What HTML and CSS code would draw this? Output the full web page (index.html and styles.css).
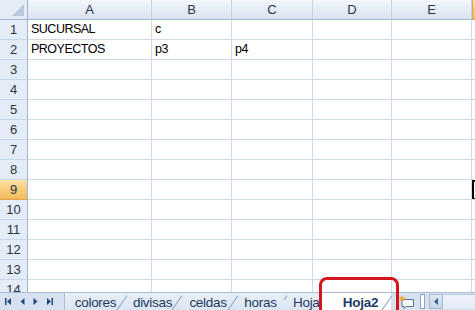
FILE: index.html
```html
<!DOCTYPE html>
<html lang="es">
<head>
    <meta charset="UTF-8">
    <title>Hoja2</title>
    <link rel="stylesheet" href="styles.css">
</head>
<body>
    <div class="sheet">
        <table class="grid">
            <colgroup>
                <col class="col-rowhead">
                <col class="col-a">
                <col class="col-b">
                <col class="col-c">
                <col class="col-d">
                <col class="col-e">
                <col class="col-f">
            </colgroup>
            <tr class="heads">
                <th class="corner"></th><th>A</th><th>B</th><th>C</th><th>D</th><th>E</th><th class="picked"></th>
            </tr>
            <tr><th>1</th><td>SUCURSAL</td><td>c</td><td></td><td></td><td></td><td></td></tr>
            <tr><th>2</th><td>PROYECTOS</td><td>p3</td><td>p4</td><td></td><td></td><td></td></tr>
            <tr><th>3</th><td></td><td></td><td></td><td></td><td></td><td></td></tr>
            <tr><th>4</th><td></td><td></td><td></td><td></td><td></td><td></td></tr>
            <tr><th>5</th><td></td><td></td><td></td><td></td><td></td><td></td></tr>
            <tr><th>6</th><td></td><td></td><td></td><td></td><td></td><td></td></tr>
            <tr><th>7</th><td></td><td></td><td></td><td></td><td></td><td></td></tr>
            <tr><th>8</th><td></td><td></td><td></td><td></td><td></td><td></td></tr>
            <tr><th class="picked">9</th><td></td><td></td><td></td><td></td><td></td><td class="active"></td></tr>
            <tr><th>10</th><td></td><td></td><td></td><td></td><td></td><td></td></tr>
            <tr><th>11</th><td></td><td></td><td></td><td></td><td></td><td></td></tr>
            <tr><th>12</th><td></td><td></td><td></td><td></td><td></td><td></td></tr>
            <tr><th>13</th><td></td><td></td><td></td><td></td><td></td><td></td></tr>
            <tr><th>14</th><td></td><td></td><td></td><td></td><td></td><td></td></tr>
        </table>
    </div>

    <div class="tabbar">
        <div class="nav">
            <svg width="7" height="7" viewBox="0 0 7 7"><rect x="0" y="0" width="1.5" height="7" fill="#23487d"/><path d="M6 0 L2 3.5 L6 7 Z" fill="#23487d"/></svg>
            <svg width="5" height="7" viewBox="0 0 5 7"><path d="M4.5 0 L0.5 3.5 L4.5 7 Z" fill="#23487d"/></svg>
            <svg width="5" height="7" viewBox="0 0 5 7"><path d="M0.5 0 L4.5 3.5 L0.5 7 Z" fill="#23487d"/></svg>
            <svg width="7" height="7" viewBox="0 0 7 7"><path d="M1 0 L5 3.5 L1 7 Z" fill="#23487d"/><rect x="5.5" y="0" width="1.5" height="7" fill="#23487d"/></svg>
        </div>
        <div class="tabs">
            <span class="tab first">colores</span>
            <span class="tab">divisas</span>
            <span class="tab">celdas</span>
            <span class="tab">horas</span>
            <span class="tab cut">Hoja</span>
            <span class="tab current">Hoja2</span>
            <span class="new-sheet">
                <svg width="17" height="14" viewBox="0 0 17 14">
                    <path d="M4 4.5 H15.5 V11.5 H8 L6 13.5 V11.5 H4 Z" fill="#f4f7fb" stroke="#5f7089" stroke-width="1"/>
                    <path d="M4 0 L5 2.2 L7.4 2.3 L5.6 3.8 L6.2 6.2 L4 4.9 L1.8 6.2 L2.4 3.8 L0.6 2.3 L3 2.2 Z" fill="#f3a92a"/>
                </svg>
            </span>
        </div>
        <div class="hscroll">
            <span class="split"></span>
            <span class="arrow">
                <svg width="4" height="7" viewBox="0 0 4 7"><path d="M4 0 L0 3.5 L4 7 Z" fill="#3b5c8c"/></svg>
            </span>
            <span class="track"></span>
        </div>
    </div>

    <div class="mark"></div>
</body>
</html>
```

FILE: styles.css
```css
body {
    margin: 0;
    width: 475px;
    height: 310px;
    overflow: hidden;
    font-family: "Liberation Sans", Arial, sans-serif;
    background: #fff;
}
.sheet {
    height: 292px;
    overflow: hidden;
}
.grid {
    table-layout: fixed;
    width: 552px;
    border-collapse: separate;
    border-spacing: 0;
    font-size: 12.5px;
    color: #000;
}
.col-rowhead { width: 28px; }
.col-a { width: 124px; }
.col-b { width: 80px; }
.col-c { width: 81px; }
.col-d { width: 79px; }
.col-e { width: 80px; }
.col-f { width: 80px; }

.grid tr {
    height: 20px;
}
.grid td {
    box-sizing: border-box;
    height: 20px;
    padding: 0 0 2px 3px;
    vertical-align: bottom;
    line-height: 15px;
    letter-spacing: -0.5px;
    border-right: 1px solid #d0d7e5;
    border-bottom: 1px solid #d0d7e5;
    white-space: nowrap;
    overflow: hidden;
}
.grid th {
    box-sizing: border-box;
    height: 20px;
    padding: 0;
    font-weight: normal;
    font-size: 13px;
    color: #2b3441;
    background: #e4ecf7;
    border-right: 1px solid #9eb6ce;
    border-bottom: 1px solid #c5d5ea;
    text-align: center;
}
.heads th {
    background: linear-gradient(#f5f8fc, #e6edf7 45%, #d9e3f1);
    border-right: 1px solid #c2d2e6;
    border-bottom: 1px solid #9eb6ce;
}
.heads th.corner {
    position: relative;
    background: #e4ecf7;
    border-right: 1px solid #9eb6ce;
}
.corner::after {
    content: "";
    position: absolute;
    right: 3px;
    bottom: 3px;
    border-style: solid;
    border-width: 0 0 12px 12px;
    border-color: transparent transparent #b9c8dc transparent;
}
.grid th.picked {
    background: linear-gradient(#fbe3a8, #f6cc7a 50%, #f1bd5b);
    border-bottom-color: #e4a549;
}
.heads th.picked {
    border-left: 1px solid #e3a64a;
}
.grid td.active {
    box-shadow: inset 2px 0 0 #000, inset 0 2px 0 #000, inset 0 -1px 0 #000;
}

.tabbar {
    display: flex;
    align-items: stretch;
    height: 18px;
    background: #d6e2f2;
    border-top: 1px solid #a9bdd6;
    box-sizing: border-box;
}
.nav {
    display: flex;
    align-items: center;
    gap: 8px;
    width: 58px;
    flex-shrink: 0;
    padding-left: 5px;
    box-sizing: border-box;
}
.tabs {
    display: flex;
    align-items: stretch;
    width: 362px;
    flex-shrink: 0;
    padding-left: 6px;
    box-sizing: border-box;
}
.tab {
    position: relative;
    display: flex;
    flex-shrink: 0;
    align-items: center;
    justify-content: center;
    font-size: 13.5px;
    letter-spacing: -0.3px;
    color: #213a60;
    background: linear-gradient(#e9eff8, #dbe5f2);
    padding: 1px 9px 0 11px;
    box-sizing: border-box;
}
.tab::before {
    content: "";
    position: absolute;
    left: -3px;
    top: 1px;
    height: 19px;
    width: 1px;
    background: #8ea2bf;
    transform: rotate(35deg);
}
.tab.first {
    width: 60px;
    border-left: 1px solid #a9bdd6;
}
.tab.first::before {
    display: none;
}
.tab:nth-child(2) { width: 55px; }
.tab:nth-child(3) { width: 56px; }
.tab:nth-child(4) { width: 49px; }
.tab.cut {
    width: 35px;
    justify-content: flex-start;
    padding: 1px 0 0 9px;
    overflow: hidden;
}
.tab.current {
    width: 72px;
    background: #fff;
    font-weight: bold;
    color: #1f3a66;
    padding: 1px 6px 0 16px;
    border-left: 1px solid #b5c6dc;
}
.tab.current::before {
    left: auto;
    right: 4px;
}
.new-sheet {
    display: flex;
    flex-shrink: 0;
    align-items: center;
    padding-left: 7px;
}
.hscroll {
    display: flex;
    flex: 1;
    align-items: stretch;
    padding: 1px 0;
}
.split {
    width: 3px;
    margin-right: 4px;
    background: #fff;
    border: 1px solid #8fa6c6;
}
.arrow {
    display: flex;
    align-items: center;
    justify-content: center;
    width: 12px;
    background: linear-gradient(#dfe8f4, #c6d5ea);
    border: 1px solid #a6b9d3;
}
.track {
    flex: 1;
    background: linear-gradient(#eef3fa, #e3eaf5);
    border-top: 1px solid #b6c6dc;
}

.mark {
    position: absolute;
    left: 319px;
    top: 277px;
    width: 80px;
    height: 40px;
    box-sizing: border-box;
    border: 3px solid #d3161d;
    border-radius: 8px;
}
```
